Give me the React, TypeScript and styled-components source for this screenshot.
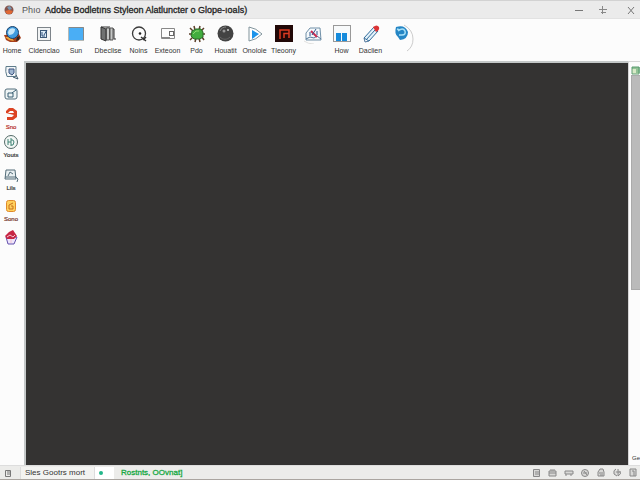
import React from "react";
import styled, { createGlobalStyle } from "styled-components";

const Global = createGlobalStyle`
  * { box-sizing: border-box; }
  body { margin: 0; background: #fcfcfc; font-family: "Liberation Sans", Arial, sans-serif; color: #333; }
  button { border: 0; padding: 0; background: none; color: inherit; font-family: inherit; }
  svg { display: block; flex: none; }
`;

const Window = styled.div`
  display: flex;
  flex-direction: column;
  height: 100vh;
  overflow: hidden;
`;

const TitleBar = styled.header`
  display: flex;
  align-items: center;
  flex: none;
  height: 19px;
  padding: 0 4px;
  background: #ebebeb;
  border-top: 1px solid #d2d2d2;
  border-bottom: 1px solid #e2e2e2;
  font-size: 9px;
  line-height: 12px;
  color: #222;
`;

const AppName = styled.span`
  width: 23px;
  margin-left: 8px;
  color: #555;
`;

const Title = styled.h1`
  flex: 1;
  margin: 0;
  font-size: 9px;
  font-weight: 400;
  white-space: nowrap;
  -webkit-text-stroke: 0.3px #222;
`;

const WindowButtons = styled.div`
  display: flex;
  gap: 14px;
`;

const WindowButton = styled.button`
  display: grid;
  place-items: center;
  width: 10px;
  height: 12px;
  &:last-child { margin-left: 4px; }
`;

const Toolbar = styled.nav`
  display: flex;
  flex: none;
  height: 42px;
  padding-top: 5px;
  background: #fcfcfc;
`;

const Tool = styled.button<{ $width: number; $start?: boolean }>`
  display: flex;
  flex-direction: column;
  align-items: center;
  flex: none;
  width: ${(p) => p.$width}px;
  padding-right: ${(p) => (p.$start ? 4 : 0)}px;
`;

const ToolLabel = styled.span`
  margin-top: 3px;
  font-size: 7px;
  line-height: 8px;
  white-space: nowrap;
  color: #333;
`;

const Body = styled.div`
  display: flex;
  flex: 1;
  min-height: 0;
`;

const Sidebar = styled.nav`
  display: flex;
  flex-direction: column;
  align-items: center;
  flex: none;
  width: 24px;
  padding: 3px 2px 0 0;
  background: #fcfcfc;
`;

const SideTool = styled.button<{ $height: number; $color?: string }>`
  display: flex;
  flex-direction: column;
  align-items: center;
  flex: none;
  height: ${(p) => p.$height}px;
  font-size: 6px;
  line-height: 8px;
  color: ${(p) => p.$color ?? "#333"};
  -webkit-text-stroke: 0.2px currentColor;
`;

const SideLabel = styled.span`
  margin-top: 1px;
`;

const Canvas = styled.main`
  flex: 1;
  background: #343332;
  border: solid #c4c8c8;
  border-width: 2px 0 0 2px;
`;

const ScrollColumn = styled.aside`
  display: flex;
  flex-direction: column;
  align-items: flex-end;
  flex: none;
  width: 12px;
  padding-top: 4px;
  border-left: 1px solid #d6d6d6;
  border-top: 1px solid #d6d6d6;
  background: #fcfcfc;
`;

const Thumb = styled.div`
  width: 9px;
  height: 54%;
  background: #bababa;
  border: 1px solid #aaa;
  border-right: 0;
`;

const Corner = styled.span`
  margin-top: auto;
  padding-bottom: 3px;
  font-size: 6px;
  line-height: 8px;
`;

const StatusBar = styled.footer`
  display: flex;
  align-items: center;
  flex: none;
  height: 15px;
  padding: 0 2px 0 4px;
  background: #ececea;
  border-top: 1px solid #ddd;
  border-bottom: 1px solid #aaa5a0;
  font-size: 8px;
  line-height: 12px;
`;

const StatusText = styled.span`
  width: 74px;
  margin-left: 8px;
  padding-left: 4px;
  border-left: 1px solid #ddd;
  white-space: nowrap;
  background: #f3f3f1;
`;

const StatusDot = styled.span`
  display: flex;
  align-items: center;
  width: 20px;
  height: 12px;
  padding-left: 3px;
  background: #fff;
  border-left: 1px solid #ddd;
`;

const StatusMessage = styled.span`
  padding-left: 7px;
  white-space: nowrap;
  color: #16a843;
  -webkit-text-stroke: 0.3px #16a843;
`;

const StatusIcons = styled.div`
  display: flex;
  gap: 6px;
  margin-left: auto;
`;

const StatusButton = styled.button`
  display: block;
  width: 10px;
  height: 10px;
`;

type DrawingProps = { size?: number; children: React.ReactNode };
const Drawing = ({ size = 20, children }: DrawingProps) => (
  <svg width={size} height={size} viewBox={`0 0 ${size} ${size}`} fill="none" aria-hidden="true">
    {children}
  </svg>
);

const tools: { name: string; label?: string; width: number; icon: React.ReactNode }[] = [
  { name: "Home", label: "Home", width: 28, icon: <>
    <path d="M2 11l2 5 4 2h7l4-4-2-4z" fill="#a8401c" /><path d="M3 13l4 3 5 1-3-4z" fill="#efaa3d" />
    <path d="M15 13l3-1-1 4-3 1z" fill="#302520" />
    <circle cx="10.500" cy="8.500" r="6" fill="#3f9bde" stroke="#1b3f66" /><path d="M6 9c0-4 4-6 7-4 0 3-2 6-6 6z" fill="#c4e6f8" /></> },
  { name: "Cldenclao", label: "Cldenclao", width: 32, icon: <>
    <rect x="3.500" y="3.500" width="13" height="13" fill="#f1f3f4" stroke="#7d848a" />
    <rect x="6.500" y="6.500" width="6" height="7" fill="#dcecf8" stroke="#3b5878" /><path d="M8 8v4h3M13 6l-3 5" stroke="#2d4f7c" /></> },
  { name: "Sun", label: "Sun", width: 32, icon: <>
    <rect x="2.500" y="3.500" width="15" height="13" fill="#4aaef5" stroke="#b5b9b6" /><path d="M3 3.500h14.500V16" stroke="#85898a" /></> },
  { name: "Dbeclise", label: "Dbeclise", width: 32, icon: <>
    <path d="M3 3l5 2v12l-5-2z" fill="#707272" stroke="#333" /><path d="M8.500 4h3v12h-3zM12 4h3v12h-3z" fill="#c4c6c5" stroke="#555" />
    <path d="M3 3h9M15 5h1v10h2" stroke="#333" /></> },
  { name: "Noins", label: "Noins", width: 29, icon: <>
    <circle cx="10" cy="9.500" r="6.500" stroke="#3a3a3a" strokeWidth="1.300" /><circle cx="11" cy="9.500" r="1.300" fill="#222" />
    <path d="M12 13l5 4M14 16l3-3" stroke="#333" strokeWidth="1.500" /></> },
  { name: "Exteoon", label: "Exteoon", width: 29, icon: <>
    <path d="M16.500 4.500h-13v10h13zM4 13.500h8" stroke="#888" /><rect x="11.500" y="7.500" width="4" height="4" fill="#fff" stroke="#666" /></> },
  { name: "Pdo", label: "Pdo", width: 29, icon: <>
    <path d="M6 7L3 4M8 6L7 2M12 6l1-4M14 7l3-3M5 10H2M15 10h3M6 13l-3 3M9 14l-1 4M12 14l1 4M15 13l2 3" stroke="#5b3f28" strokeWidth="1.500" />
    <path d="M5 7l4-2h5l2 3v5l-3 2H7l-3-3z" fill="#43ad3f" stroke="#2c6a2a" /><path d="M6 10l3-3h3" stroke="#8fda72" /></> },
  { name: "Houatit", label: "Houatit", width: 29, icon: <>
    <circle cx="9.500" cy="9.500" r="8" fill="#434343" /><path d="M4 7c1-3 4-4 6-4" stroke="#888" />
    <circle cx="8" cy="7" r="1.500" fill="#999" /><circle cx="12" cy="6" r="1" fill="#ccc" /><path d="M4 13c3 3 7 3 10 0" stroke="#666" /></> },
  { name: "Onolole", label: "Onolole", width: 29, icon: <>
    <path d="M4 3q7 1 13 7-6 6-13 7z" fill="#fff" stroke="#80939b" strokeLinejoin="round" /><path d="M7 6l7 4-7 5z" fill="#1b93ea" /></> },
  { name: "Tleoony", label: "Tleoony", width: 29, icon: <>
    <rect x="1" y="1" width="18" height="17" fill="#210807" /><path d="M6 15V6h9v8M10 14V9.500h5" stroke="#d93a22" strokeWidth="1.500" /></> },
  { name: "Sketch", width: 29, icon: <>
    <path d="M3 9l4-5h10l1 12H3z" stroke="#7090a8" fill="#f5f9fb" /><path d="M3 15l4-2 4 1 3-2 4 3" stroke="#52799a" />
    <path d="M8 7l6 6" stroke="#c92d51" strokeWidth="2" /><path d="M7 8v4M13 5l-4 6M14 7v4" stroke="#31568c" />
    <path d="M1 17q4 3 10 3" stroke="#e0e0de" /></> },
  { name: "How", label: "How", width: 29, icon: <>
    <rect x="1.500" y="1.500" width="17" height="16" fill="#f8fafb" stroke="#999" /><path d="M4 9h5v8H4zM10 9h5v8h-5z" fill="#168bdc" /></> },
  { name: "Daclien", label: "Daclien", width: 29, icon: <>
    <path d="M3 14L13 3l4 4L8 17zM5 16l9-10" fill="#e4f2fa" stroke="#306b9b" /><path d="M12 3q4-3 6 0 1 3-3 5z" fill="#db3435" />
    <path d="M3 14l1 4 4-1" stroke="#50779c" /></> },
  { name: "Web", width: 29, icon: <>
    <path d="M5 3q9-3 12 5 0 7-8 8L7 13q-4-3-2-10z" fill="#2586c5" /><path d="M7 7q5-4 7 0 1 4-3 4H8M6 5l3 1" stroke="#a8e0f7" strokeWidth="1.500" />
    </> },
];

const sideTools: { name: string; label?: string; height: number; color?: string; icon: React.ReactNode }[] = [
  { name: "Find", height: 22, icon: <><path d="M3 2.500h10v10H4q-2-5-1-10z" fill="#f3f6f8" stroke="#5f7c8b" /><path d="M6 5h5v4l-2 2-3-2z" fill="#9fb6d0" stroke="#3d5580" /><path d="M10 13l5 2-2-4" stroke="#3d5769" /></> },
  { name: "Image", height: 20, icon: <><rect x="2" y="3" width="12" height="10" rx="2" stroke="#536e7c" fill="#eef4f5" /><path d="M5 7h5v4H5zM9 7l4-3" stroke="#365d72" /></> },
  { name: "Sno", label: "Sno", height: 28, color: "#b62c28", icon: <><path d="M3 7V5l3-3h4l4 3v6l-4 3H4v-3h5l2-2z" fill="#dc4424" /><path d="M5 7l2-2h3l1 2z" fill="#fff" /></> },
  { name: "Youts", label: "Youts", height: 33, icon: <><circle cx="8" cy="8" r="6.500" fill="#f3f7f5" stroke="#546b68" /><path d="M5 5v6M5 8h3M8 4v8M8 6h2l1 2-1 3H8" stroke="#428476" /></> },
  { name: "Lils", label: "Lils", height: 31, icon: <><path d="M3 3h9l1 9H2zM5 9l2-4 3 2M2 10h11M12 9l3 3-1 3" fill="#e8eff1" stroke="#546d79" /></> },
  { name: "Sono", label: "Sono", height: 31, color: "#75352c", icon: <><rect x="3.500" y="2.500" width="9" height="11" rx="2" fill="#ffd05c" stroke="#e08a2c" /><path d="M10 5L6 7v4h4V8H8" stroke="#c8701f" /></> },
  { name: "Cup", height: 22, icon: <><path d="M3 8h11l-3 7H5z" fill="#eee5fb" stroke="#6350ad" /><path d="M2 7l4-4 4-2 4 6-3 3H4z" fill="#c62645" /><path d="M4 8l3-2 3 2 2-2M8 10v4" stroke="#f5c4d0" /></> },
];

const statusIcons: { name: string; icon: React.ReactNode }[] = [
  { name: "Page", icon: <path d="M1.500 1.500h6v7h-6zM3 4h4M3 6h4" /> },
  { name: "Folder", icon: <path d="M1 3h7v5H1zM2 2h5M1 5h7" /> },
  { name: "Drive", icon: <path d="M1 3h8v3H1zM2 6v2M7 6v2" /> },
  { name: "Target", icon: <><circle cx="5" cy="5" r="3.500" /><path d="M3 5h4M4 3l3 4" /></> },
  { name: "Print", icon: <path d="M2 4l2-3h3l1 3v4H2zM3 5h4M4 7h3" /> },
  { name: "Sync", icon: <path d="M4 1Q1 2 2 6l3 2M6 1v7q4-2 2-5M4 4h4" /> },
  { name: "Panel", icon: <path d="M2 1h6v7H2zM4 3h2v5" /> },
];

export default function App() {
  return (
    <>
      <Global />
      <Window>
        <TitleBar>
          <Drawing size={10}>
            <circle cx="5" cy="5" r="4.500" fill="#85524a" /><path d="M1 6l4-1 4 1-2 3H3z" fill="#df6835" /><path d="M3 2l3-1 2 3-3 1z" fill="#7796b0" />
          </Drawing>
          <AppName>Phıo</AppName>
          <Title>Adobe Bodletıns Styleon Alatluncter o Glope-ıoals)</Title>
          <WindowButtons>
            <WindowButton aria-label="Minimize"><Drawing size={10}><path d="M1 5.500h8" stroke="#777" /></Drawing></WindowButton>
            <WindowButton aria-label="Maximize"><Drawing size={10}><path d="M1 4.500h8M4.500 1v8M3 7.500h5" stroke="#888" /></Drawing></WindowButton>
            <WindowButton aria-label="Close"><Drawing size={10}><path d="M2 2l6 7M8 2L2 9" stroke="#777" /></Drawing></WindowButton>
          </WindowButtons>
        </TitleBar>
        <Toolbar aria-label="Tools">
          {tools.map((t, i) => (
            <Tool key={t.name} $width={t.width} $start={i === 0} aria-label={t.name}>
              {t.name === "Web" ? (
                <svg width="28" height="32" viewBox="-5 0 28 32" fill="none" aria-hidden="true">
                  {t.icon}<path d="M13 1q9 5 9 14 0 8-6 12" stroke="#ccc" />
                </svg>
              ) : <Drawing>{t.icon}</Drawing>}
              {t.label && <ToolLabel>{t.label}</ToolLabel>}
            </Tool>
          ))}
        </Toolbar>
        <Body>
          <Sidebar aria-label="Panels">
            {sideTools.map((t) => (
              <SideTool key={t.name} $height={t.height} $color={t.color} aria-label={t.name}>
                <Drawing size={16}>{t.icon}</Drawing>
                {t.label && <SideLabel>{t.label}</SideLabel>}
              </SideTool>
            ))}
          </Sidebar>
          <Canvas />
          <ScrollColumn>
            <Drawing size={9}><path d="M1 1h7v7H1z" fill="#d8eac7" stroke="#5e9c72" /><path d="M1 2h8M5 4h4M5 6h4" stroke="#4a9865" /></Drawing>
            <Thumb />
            <Corner>Ge</Corner>
          </ScrollColumn>
        </Body>
        <StatusBar>
          <Drawing size={8}><path d="M1.500 1.500h5v6h-5zM3 3h3M3 5h3" stroke="#777" /></Drawing>
          <StatusText>Sles Gootrs mort</StatusText>
          <StatusDot><Drawing size={6}><circle cx="3" cy="3" r="2" fill="#23b68a" /></Drawing></StatusDot>
          <StatusMessage>Rostnts, OOvnat]</StatusMessage>
          <StatusIcons>
            {statusIcons.map((s) => (
              <StatusButton key={s.name} aria-label={s.name}>
                <Drawing size={10}><g stroke="#888" fill="#d8d8d6">{s.icon}</g></Drawing>
              </StatusButton>
            ))}
          </StatusIcons>
        </StatusBar>
      </Window>
    </>
  );
}
